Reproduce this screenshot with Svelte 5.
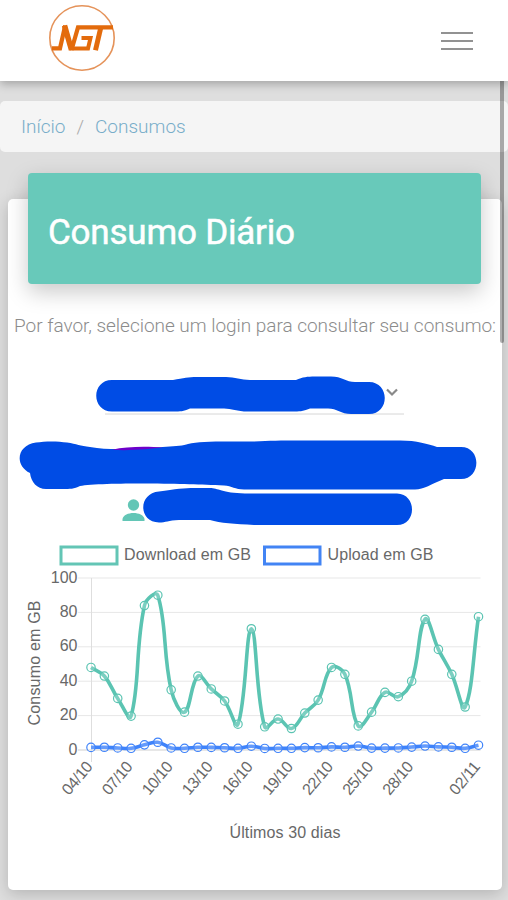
<script>
  const download = [48, 43, 30, 19.7, 84, 90, 35, 22, 43, 35.5, 28.5, 15, 70.5, 13.5, 18, 12.5, 21.5, 29, 48, 44, 14, 22, 33.5, 31, 40, 76, 58.5, 44, 25, 77.5];
  const upload = [1.5, 1.6, 1.2, 1, 3, 4.5, 1.2, 1, 1.6, 1.5, 1.3, 1, 2.2, 0.9, 1, 1, 1.4, 1.3, 1.8, 1.6, 2.3, 1.1, 1.1, 1.2, 1.7, 2.3, 1.8, 1.6, 1, 2.8];
  const labels = [[0, '04/10'], [3, '07/10'], [6, '10/10'], [9, '13/10'], [12, '16/10'], [15, '19/10'], [18, '22/10'], [21, '25/10'], [24, '28/10'], [29, '02/11']];
  const ticks = [100, 80, 60, 40, 20, 0];

  const left = 91;
  const right = 478.5;
  const px = (i) => left + ((right - left) * i) / 29;
  const py = (v) => 210 - v * 1.72;
  const toPoints = (values) => values.map((v, i) => [px(i), py(v)]);

  // Smooth line with tension relative to the distance between neighbours
  function spline(points) {
    const t = 0.4;
    const clamp = (y) => Math.max(38, Math.min(210, y));
    const ctrl = points.map((c, i) => {
      const p = points[i - 1] ?? c;
      const n = points[i + 1] ?? c;
      const d1 = Math.hypot(c[0] - p[0], c[1] - p[1]);
      const d2 = Math.hypot(n[0] - c[0], n[1] - c[1]);
      const a = (t * d1) / (d1 + d2);
      const b = (t * d2) / (d1 + d2);
      return [
        c[0] - a * (n[0] - p[0]), clamp(c[1] - a * (n[1] - p[1])),
        c[0] + b * (n[0] - p[0]), clamp(c[1] + b * (n[1] - p[1]))
      ];
    });
    let d = `M${points[0]}`;
    for (let i = 1; i < points.length; i++) {
      d += `C${ctrl[i - 1][2]} ${ctrl[i - 1][3]} ${ctrl[i][0]} ${ctrl[i][1]} ${points[i]}`;
    }
    return d;
  }

  const series = [
    { color: '#5bc4b2', points: toPoints(download) },
    { color: '#3f83fa', points: toPoints(upload) }
  ];
</script>

<div class="page">
  <header>
    <svg class="logo" width="68" height="68" viewBox="0 0 68 68" aria-label="NGT">
      <circle cx="34" cy="34" r="32.2" fill="none" stroke="#e5935a" stroke-width="1.6" />
      <g fill="none" stroke="#e36b0c" stroke-width="4">
        <path d="M4 44.300H12L17.200 21.500" stroke-width="4.200" />
        <path d="M16.500 21.500L23.500 46" stroke-width="5.500" />
        <path d="M23.500 46L30 23.300H65" stroke-width="4.200" />
        <path d="M22 44.500H40L42.500 34H33.500" />
        <path d="M47.500 46.300L52.800 23.500" stroke-width="5" />
      </g>
    </svg>
    <button class="menu" aria-label="Menu"><i></i><i></i><i></i></button>
  </header>

  <nav><a href="#inicio">Início</a><span>/</span><a href="#consumos">Consumos</a></nav>

  <main>
    <div class="title"><h1>Consumo Diário</h1></div>
    <p>Por favor, selecione um login para consultar seu consumo:</p>

    <svg class="select" width="494" height="55" viewBox="8 365 494 55">
      <path d="M105 414H404" stroke="#d6d6d6" />
      <path d="M112 380H173C184 378 188 377 197 377H226C235 377 241 380 250 380H296C303 377 307 376.500 315 376.500H331C342 376.500 346 382 355 382H369C390 382 390 414 369 414H351C341 414 337 408.500 328 408.500H310C302 411.500 300 411.500 292 411.500H250C238 412 232 408.500 224 408.500H190C183 411.500 181 411.500 173 411.500H112C91 411.500 91 380 112 380Z" fill="#004ce5" />
      <path d="M387 389.500L392 394.500L397 389.500" fill="none" stroke="#898989" stroke-width="2.200" />
    </svg>

    <svg class="info" width="494" height="110" viewBox="8 420 494 110">
      <path d="M36 442.500C45 441 58 441 67 442.500C77 444 80 446 90 447C105 449.500 120 449.500 138 448.500C155 447 180 447 188 444C200 441 217 441.500 254 441.500C270 440.500 280 440.500 300 440.500H400C417 440.500 428 444 437 447H461C482 447 481 479 461 479H444C431 484 424 489.500 415 489.500H244C235 489.500 232 486 224 485.500C200 484.500 182 484 145 483.500C120 483.500 90 484 80 486C74 489 70 489 63 489H46C37 489 31 482 30 473C14 465 17 445 36 442.500Z" fill="#004ce5" />
      <path d="M112 449.800C127 446.300 147 446.300 163 447.600C150 449 130 451 112 449.800Z" fill="#6d00ca" />
      <path d="M159 491.500C175 489 185 488 194 488H210C218 488 222 493 245 493.500H397C417 494 417 525 397 525H254C235 524 220 523 210 520H179C168 520.500 166 522.500 159 522.500C138 522 138 493 159 491.500Z" fill="#004ce5" />
      <g fill="#63c6b6">
        <circle cx="133.500" cy="505" r="5.700" />
        <path d="M122.500 521V519C124 511 143 511 144.500 519V521Z" />
      </g>
    </svg>

    <svg class="chart" width="494" height="330" viewBox="8 0 494 330">
      <g fill="none" stroke-width="3">
        <rect x="61" y="7" width="56" height="17" stroke="#63c5b5" />
        <rect x="264.500" y="7" width="55.500" height="17" stroke="#4284f4" />
      </g>
      <text x="124" y="20" textLength="127">Download em GB</text>
      <text x="327.500" y="20" textLength="106">Upload em GB</text>

      {#each ticks as v}
        <path d="M78 {py(v)}H{right + 2}" stroke={v ? '#e7e7e7' : '#cfcfcf'} />
        <text x="77.500" y={py(v) + 4.500} text-anchor="end">{v}</text>
      {/each}
      <path d="M91.500 38V222" stroke="#dedede" />

      <text transform="translate(40 185.500) rotate(-90)" textLength="125">Consumo em GB</text>
      {#each labels as [i, label]}
        <text transform="translate({px(i) + 2.500} 227) rotate(-50)" text-anchor="end" textLength="38">{label}</text>
      {/each}

      {#each [...series].reverse() as s}
        <path d={spline(s.points)} fill="none" stroke={s.color} stroke-width="3.600" />
        {#each s.points as [x, y]}
          <circle cx={x} cy={y} r="4.200" fill="#ffffff33" stroke={s.color} stroke-width="1.200" />
        {/each}
      {/each}

      <text x="229.500" y="298" textLength="111">Últimos 30 dias</text>
    </svg>
  </main>
  <div class="scroll"></div>
</div>

<style>
  :global(body) { margin: 0; background: #dedede; }
  .page { position: relative; box-sizing: border-box; width: 508px; height: 900px; overflow: hidden; background: #dedede; font-family: Roboto, 'Liberation Sans', sans-serif; }
  header { position: relative; z-index: 2; display: flex; justify-content: space-between; align-items: flex-start; box-sizing: border-box; height: 81px; padding: 4px 35px 0 48px; background: #fff; box-shadow: 0 3px 9px #00000045; }
  .logo { display: block; }
  .menu { display: flex; flex-direction: column; gap: 6px; margin-top: 28px; padding: 0; border: 0; background: none; }
  .menu i { width: 32px; height: 2px; background: #929292; }
  nav { display: flex; align-items: center; height: 51px; margin-top: 20px; padding-left: 21px; border-radius: 5px; background: #f5f5f5; box-sizing: border-box; font-size: 19px; font-weight: 300; }
  nav a { color: #78adc9; text-decoration: none; }
  nav span { margin: 0 11px; color: #aaa; }
  main { display: flex; flex-direction: column; width: 494px; height: 691px; margin: 47px 0 0 8px; border-radius: 5px; background: #fff; box-shadow: 0 4px 16px #00000030; }
  .title { display: flex; align-items: center; flex: none; box-sizing: border-box; height: 111px; margin: -26px 21px 0 20px; padding: 8px 20px 0; border-radius: 4px; background: #68c9ba; box-shadow: 0 8px 22px #00000036; }
  h1 { margin: 0; color: #fff; font-size: 35px; font-weight: 400; line-height: 42px; letter-spacing: -.2px; white-space: nowrap; -webkit-text-stroke: .5px #fff; }
  p { position: relative; height: 24px; margin: 30px 0 27px 6px; color: #8c8c8c; font-size: 19px; font-weight: 300; line-height: 24px; letter-spacing: -.03px; white-space: nowrap; }
  svg { display: block; flex: none; }
  .chart { margin-top: 10px; }
  .chart text { font: 16px 'Liberation Sans', Arial, sans-serif; fill: #686868; }
  .scroll { position: absolute; z-index: 1; top: 80px; left: 499.500px; width: 4px; height: 263px; background: #00000050; border-radius: 0 0 2px 2px; }
</style>
